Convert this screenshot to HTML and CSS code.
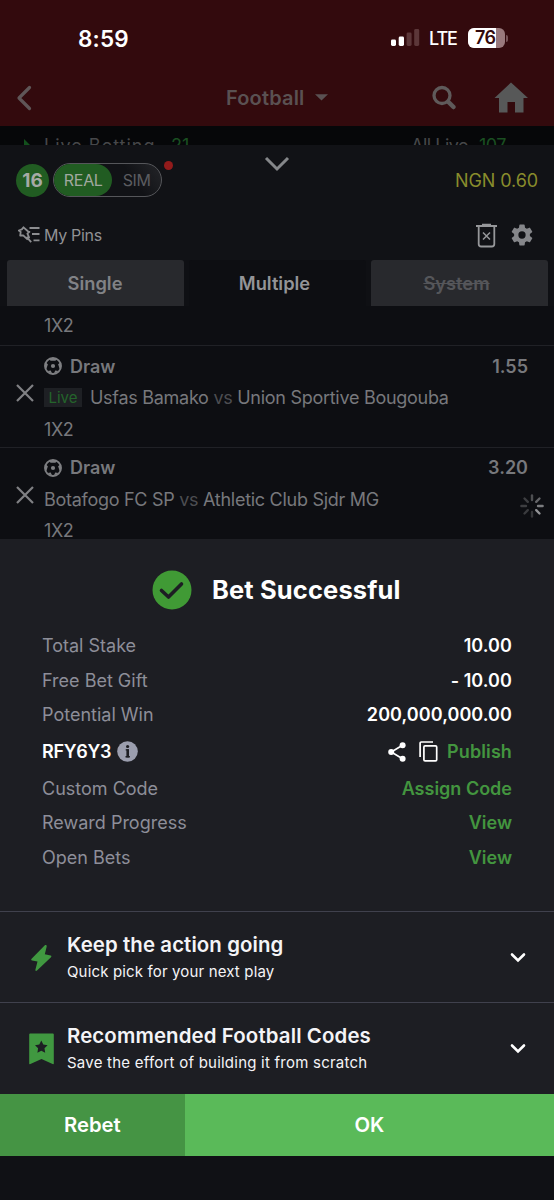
FILE: index.html
```html
<!DOCTYPE html>
<html lang="en">
<head>
<meta charset="utf-8">
<title>Bet Successful</title>
<link rel="stylesheet" href="styles.css">
</head>
<body>
<div class="screen">
  <header class="header">
    <div class="status">
      <span class="clock">8:59</span>
      <svg class="signal" width="30" height="20" viewBox="0 0 30 20"><rect x="1" y="11.5" width="5" height="6.5" rx="1.4" fill="#fff"/><rect x="8.7" y="8.5" width="5.3" height="9.5" rx="1.4" fill="#fff"/><rect x="16.6" y="4.6" width="5" height="13.4" rx="1.4" fill="#5c3739"/><rect x="24.2" y="1" width="5" height="17" rx="1.4" fill="#5c3739"/></svg>
      <span class="lte">LTE</span>
      <span class="battery"><span class="level">76</span></span><span class="battery-tip"></span>
    </div>
    <nav class="nav">
      <svg class="back" width="18" height="28" viewBox="0 0 18 28"><path d="M15.500 3.500 5 14l10.500 10.500" fill="none" stroke="#5f5657" stroke-width="3.200" stroke-linecap="round" stroke-linejoin="round"/></svg>
      <div class="nav-title"><span>Football</span><svg width="13" height="7" viewBox="0 0 13 7"><path d="M0 .3h13L6.500 6.500z" fill="#5a5152"/></svg></div>
      <svg class="search" width="26" height="26" viewBox="0 0 26 26"><circle cx="11" cy="10.500" r="8" fill="none" stroke="#5f5a5a" stroke-width="3.300"/><path d="m17.500 17 5 5" stroke="#5f5a5a" stroke-width="4.500" stroke-linecap="round"/></svg>
      <svg class="home" width="34" height="31" viewBox="0 0 34 31"><path d="M17 .5 34 16h-4.500v14.500h-8.500V20h-7.500v10.500H5V16H.5z" fill="#575858"/></svg>
    </nav>
  </header>
  <div class="strip">
    <svg width="6" height="12" viewBox="0 0 6 12"><path d="M0 0v12l6-6z" fill="#12501c"/></svg>
    <span class="strip-name">Live Betting</span><span class="strip-count">21</span>
    <span class="strip-all">All Live</span><span class="strip-total">107</span>
  </div>
  <section class="slip">
    <div class="slip-top">
      <span class="count">16</span>
      <div class="toggle"><span class="real">REAL</span><span class="sim">SIM</span><i class="dot"></i></div>
      <svg class="collapse" width="26" height="16" viewBox="0 0 26 16"><path d="m2 2 11 11L24 2" fill="none" stroke="#85878a" stroke-width="3"/></svg>
      <span class="balance">NGN 0.60</span>
    </div>
    <div class="pins">
      <svg width="23" height="18" viewBox="0 0 23 18" fill="none" stroke="#8c8d90" stroke-width="1.800"><path d="m5.500 1.300 4.700 4.200 1.200.4-2 1.700 1.700 3.800-1.900 1.800-4-3.900-3 .2.500-3.600-1.900-1.400 3-1.200zM8.500 10.800l4.700 5.400" stroke-linejoin="round"/><path d="M11.500 2h10M14 8h7.500M15.500 14.300h6"/></svg>
      <span>My Pins</span>
      <svg class="trash" width="21" height="25" viewBox="0 0 21 25" fill="none" stroke="#96979a"><path d="M0 3h21M6 1.600h9" stroke-width="1.800"/><path d="M2.700 3v18q0 2.500 2.500 2.500h10.600q2.500 0 2.500-2.500V3" stroke-width="1.800"/><path d="m7 9.500 7 7m0-7-7 7" stroke-width="1.500"/></svg>
      <svg class="gear" width="22" height="22" viewBox="2 2 20 20"><path fill="#85868a" d="M19.140 12.940c.04-.3.060-.61.060-.94s-.02-.64-.07-.94l2.030-1.580a.49.49 0 0 0 .12-.61l-1.920-3.320a.49.49 0 0 0-.59-.22l-2.390.96a7 7 0 0 0-1.620-.94l-.36-2.540A.48.480 0 0 0 13.920 2.400h-3.840a.48.480 0 0 0-.48.410l-.36 2.540a7 7 0 0 0-1.620.94l-2.390-.96a.49.490 0 0 0-.59.220L2.720 8.870a.48.480 0 0 0 .12.610l2.030 1.580a6 6 0 0 0 0 1.880l-2.030 1.580a.49.490 0 0 0-.12.610l1.920 3.320c.12.220.37.290.59.220l2.390-.96c.5.380 1.030.7 1.620.94l.36 2.540c.05.240.24.410.48.410h3.840c.24 0 .44-.17.480-.41l.36-2.540a7 7 0 0 0 1.620-.94l2.390.96c.22.080.47 0 .59-.22l1.920-3.320a.48.480 0 0 0-.12-.61zM12 15.300a3.300 3.300 0 1 1 0-6.600 3.300 3.300 0 0 1 0 6.600z"/></svg>
    </div>
    <div class="tabs"><span class="tab">Single</span><span class="tab active">Multiple</span><span class="tab off">System</span></div>
    <div class="bets">
      <div class="bet first"><div class="market">1X2</div></div>
      <div class="bet">
        <svg class="remove" width="18" height="18" viewBox="0 0 18 18"><path d="m1 1 16 16M17 1 1 17" stroke="#808184" stroke-width="2.200"/></svg>
        <div class="pick"><svg width="18" height="18" viewBox="0 0 18 18"><circle cx="9" cy="9" r="8" fill="none" stroke="#7e7f82" stroke-width="1.900"/><circle cx="9" cy="9" r="2.100" fill="#7e7f82"/><path d="M5 1.500h8L11.500 3.700h-5zM1 5l2.900 2.300L2.400 11.800 1 12zM17 5l-2.900 2.300 1.500 4.500 1.400.2zM3.500 14l3.300-.4 1.400 3.400zM14.500 14l-3.300-.4L9.800 17z" fill="#7e7f82"/></svg><span class="draw">Draw</span><span class="odds">1.55</span></div>
        <div class="match"><span class="live">Live</span><span class="teams">Usfas Bamako <em>vs</em> Union Sportive Bougouba</span></div>
        <div class="market">1X2</div>
      </div>
      <div class="bet">
        <svg class="remove" width="18" height="18" viewBox="0 0 18 18"><path d="m1 1 16 16M17 1 1 17" stroke="#808184" stroke-width="2.200"/></svg>
        <div class="pick"><svg width="18" height="18" viewBox="0 0 18 18"><circle cx="9" cy="9" r="8" fill="none" stroke="#7e7f82" stroke-width="1.900"/><circle cx="9" cy="9" r="2.100" fill="#7e7f82"/><path d="M5 1.500h8L11.500 3.700h-5zM1 5l2.900 2.300L2.400 11.800 1 12zM17 5l-2.900 2.300 1.500 4.500 1.400.2zM3.500 14l3.300-.4 1.400 3.400zM14.500 14l-3.300-.4L9.800 17z" fill="#7e7f82"/></svg><span class="draw">Draw</span><span class="odds">3.20</span></div>
        <div class="match"><span class="teams">Botafogo FC SP <em>vs</em> Athletic Club Sjdr MG</span></div>
        <div class="market">1X2</div>
      </div>
      <svg class="spinner" width="24" height="24" viewBox="-12 -12 24 24" stroke-width="2.400" stroke-linecap="round"><path d="M0-6v-4.600" stroke="#4e4f52"/><path d="m4.200-4.200 3.300-3.300" stroke="#646568"/><path d="M6 0h4.600" stroke="#7b7c7f"/><path d="m4.200 4.200 3.300 3.300" stroke="#929396"/><path d="M0 6v4.600" stroke="#353639"/><path d="m-4.200 4.200-3.300 3.300" stroke="#3a3b3e"/><path d="M-6 0h-4.600" stroke="#3d3e41"/><path d="m-4.200-4.200-3.300-3.300" stroke="#3d3e41"/></svg>
    </div>
  </section>
  <main class="result">
    <h1 class="title"><svg width="40" height="40" viewBox="0 0 40 40"><circle cx="20" cy="20" r="19.500" fill="#409a35"/><path d="m9.500 20.500 7 6.500L29.500 14" fill="none" stroke="#1d1e23" stroke-width="3.600" stroke-linecap="round" stroke-linejoin="round"/></svg><span>Bet Successful</span></h1>
    <div class="rows">
      <div class="row"><span>Total Stake</span><b>10.00</b></div>
      <div class="row"><span>Free Bet Gift</span><b>- 10.00</b></div>
      <div class="row"><span>Potential Win</span><b>200,000,000.00</b></div>
      <div class="row code"><b class="booking">RFY6Y3</b><svg class="info" width="21" height="21" viewBox="0 0 21 21"><circle cx="10.500" cy="10.500" r="10.300" fill="#9b9eae"/><circle cx="10.600" cy="5.500" r="1.600" fill="#1d1e23"/><path d="M8.700 8.900h3M8.500 15.700h4.400" stroke="#1d1e23" stroke-width="1.400" fill="none"/><path d="M10.700 8.200v8.200" stroke="#1d1e23" stroke-width="2.600"/></svg>
        <div class="actions"><svg width="18" height="20" viewBox="0 0 18 20"><path d="M14.500 3.300 3.300 10l11.200 6.700" fill="none" stroke="#fff" stroke-width="1.700"/><circle cx="14.600" cy="3.300" r="3" fill="#fff"/><circle cx="3.200" cy="10" r="3" fill="#fff"/><circle cx="14.600" cy="16.700" r="3" fill="#fff"/></svg><svg class="copy" width="19" height="21" viewBox="0 0 19 21" fill="none" stroke="#fff" stroke-width="1.700"><rect x="4.900" y="4.900" width="12.800" height="15" rx="1.200"/><path d="M1.100 16V2.200q0-1.200 1.200-1.200H14"/></svg><a>Publish</a></div></div>
      <div class="row"><span>Custom Code</span><a>Assign Code</a></div>
      <div class="row"><span>Reward Progress</span><a>View</a></div>
      <div class="row"><span>Open Bets</span><a>View</a></div>
    </div>
    <div class="card">
      <svg width="28" height="32" viewBox="0 0 28 32"><path d="m17.600 3.500-13 13.200c-.7.800-.5 1.500.5 1.700l5.400 1.200-2.100 8.200c-.3 1.300.8 1.500 1.600.7l14-13.300c.7-.8.5-1.500-.4-1.700l-5.800-1.200 1.900-7.700c.3-1.400-1-2.200-2.100-1.100z" fill="#409840"/></svg>
      <div class="card-text"><h2 class="c1">Keep the action going</h2><p class="s1">Quick pick for your next play</p></div>
      <svg class="down" width="16" height="12" viewBox="0 0 16 12"><path d="m2 2.500 6 6 6-6" fill="none" stroke="#fff" stroke-width="2.600" stroke-linecap="round"/></svg>
    </div>
    <div class="card">
      <svg width="28" height="32" viewBox="0 0 28 32"><path d="M3.200.5h22.600q1 0 1 1v29q0 1-1.200.6L14.500 26 3.400 31.100q-1.200.4-1.200-.6v-29q0-1 1-1z" fill="#409840"/><path d="m14.300 7.500 2 4.100 4.300.6-3.100 3.100.7 4.500-3.900-2.100-3.900 2.100.7-4.500-3.100-3.100 4.300-.6z" fill="#1d1e23"/></svg>
      <div class="card-text"><h2 class="c2">Recommended Football Codes</h2><p class="s2">Save the effort of building it from scratch</p></div>
      <svg class="down" width="16" height="12" viewBox="0 0 16 12"><path d="m2 2.500 6 6 6-6" fill="none" stroke="#fff" stroke-width="2.600" stroke-linecap="round"/></svg>
    </div>
  </main>
  <footer class="buttons"><span class="rebet">Rebet</span><span class="ok">OK</span></footer>
</div>
</body>
</html>
```
FILE: styles.css
```css
* { box-sizing: border-box; margin: 0; padding: 0; }
body { background: #101115; font-family: Inter, "Liberation Sans", sans-serif; }
svg { display: block; flex: none; }
span, b, a { white-space: nowrap; }
.screen { width: 554px; height: 1200px; overflow: hidden; background: #101115; }
.header { height: 126px; background: #330a0d; }
.status { display: flex; align-items: center; height: 76px; padding-left: 78px; color: #fff; }
.clock { width: 52px; font-size: 22.500px; font-weight: 600; letter-spacing: .2px; }
.signal { margin-left: 260px; }
.lte { width: 29px; margin-left: 9px; font-size: 18px; font-weight: 500; letter-spacing: -1.1px; }
.battery { width: 37px; height: 20px; margin-left: 10px; border-radius: 6px; overflow: hidden; background: #99797c; }
.level { display: block; width: 28px; height: 20px; padding-left: 7px; background: #fff; color: #330a0d; font-size: 18px; font-weight: 600; line-height: 20px; letter-spacing: -.7px; }
.battery-tip { width: 2px; height: 7px; margin-left: 1px; border-radius: 0 2px 2px 0; background: #765357; }
.nav { display: flex; align-items: center; height: 43px; padding-left: 14px; }
.nav-title { display: flex; align-items: center; gap: 11px; margin-left: 194px; color: #5a5152; font-size: 20px; font-weight: 600; letter-spacing: .15px; }
.search { margin-left: 103px; }
.home { margin-left: 37px; }
.strip { display: flex; height: 19px; padding: 9px 0 0 24px; overflow: hidden; background: #060709; font-size: 18px; line-height: 22px; color: #46474a; }
.strip svg { margin-top: 4px; }
.strip-name { width: 113px; margin-left: 14px; letter-spacing: 1px; }
.strip-count { width: 20px; margin-left: 14px; color: #1a4f21; }
.strip-all { width: 56px; margin-left: 220px; letter-spacing: -.5px; }
.strip-total { margin-left: 12px; color: #1a4f21; letter-spacing: -.5px; }
.slip { height: 394px; background: #111216; }
.slip-top { display: flex; align-items: center; height: 70px; padding: 0 16px; }
.count { width: 33px; height: 33px; border-radius: 50%; background: #215c22; color: #a6aaa6; font-size: 19px; font-weight: 700; line-height: 33px; text-align: center; }
.toggle { position: relative; display: flex; width: 109px; height: 34px; margin-left: 4px; border: 1px solid #55565a; border-radius: 17px; font-size: 16px; line-height: 33px; text-align: center; color: #5b5c60; background: linear-gradient(55deg, #111216 70%, #242529); }
.real { width: 59px; border-radius: 16px; background: #215c22; color: #a0a89f; letter-spacing: -.3px; }
.sim { width: 49px; letter-spacing: -.3px; }
.dot { position: absolute; top: -3px; right: -12px; width: 9px; height: 9px; border-radius: 50%; background: #921b1b; }
.collapse { margin: -32px 0 0 102px; }
.balance { margin-left: auto; color: #898c2c; font-size: 18px; letter-spacing: -.1px; }
.pins { display: flex; align-items: center; height: 40px; padding: 0 21px 0 18px; color: #909194; font-size: 16px; letter-spacing: -.3px; }
.pins span { margin-left: 3px; }
.trash { margin-left: auto; }
.gear { margin-left: 14px; }
.tabs { display: grid; grid-template-columns: 177px 177px 177px; gap: 5px; height: 51px; padding: 5px 6.500px 0; background: linear-gradient(#111216 5px, #0f1014 5px); }
.tab { height: 46px; border-radius: 3px 3px 0 0; background: #28292d; color: #818286; font-size: 18.300px; font-weight: 600; line-height: 47px; text-align: center; }
.active { padding-right: 5px; background: #0d0e12; color: #939497; }
.off { padding-right: 5px; color: #55565a; text-decoration: line-through; }
.bets { position: relative; height: 233px; overflow: hidden; background: #0d0e12; color: #77787c; font-size: 18px; }
.bet { position: relative; height: 101.700px; padding: 6.500px 26px 0 44px; border-top: 1px solid #202126; }
.market { height: 32px; line-height: 32px; letter-spacing: -.4px; margin-top: -2px; }
.first { height: 39px; padding-top: 6px; border-top: 0; }
.remove { position: absolute; left: 15.500px; top: 38px; }
.pick { display: flex; align-items: center; height: 27px; font-weight: 600; }
.draw { margin-left: 8px; }
.odds { margin-left: auto; }
.match { display: flex; align-items: center; height: 36px; }
.teams { letter-spacing: -.28px; }
.match em { color: #4c4d51; font-style: normal; }
.live { width: 38px; height: 19px; margin-right: 8px; background: #1e2024; color: #24642b; font-size: 15px; line-height: 19px; text-align: center; }
.spinner { position: absolute; left: 519.500px; top: 187.500px; }
.result { height: 555px; background: #1d1e23; }
.title { display: flex; align-items: center; gap: 20px; height: 89px; padding: 12px 0 0 152px; color: #fff; font-size: 25.500px; font-weight: 700; letter-spacing: .13px; }
.rows { height: 283px; padding: 0 42px; color: #8d8e99; font-size: 18px; }
.row { display: flex; align-items: center; justify-content: space-between; height: 34.800px; }
.row b { color: #fff; font-weight: 600; letter-spacing: .07px; }
.row a { color: #43953f; font-weight: 600; }
.code { height: 38.300px; justify-content: flex-start; }
.row .booking { letter-spacing: -.3px; }
.info { margin-left: 6px; }
.actions { display: flex; align-items: center; margin-left: auto; }
.actions a { letter-spacing: .1px; }
.copy { margin: 0 9px 0 13px; }
.card { display: flex; align-items: center; height: 91px; padding: 1px 28px 0 27px; border-top: 1px solid #40414d; color: #f4f4f7; }
.card-text { margin-left: 12px; }
.card h2 { height: 28px; font-size: 20.400px; font-weight: 600; line-height: 28px; white-space: nowrap; }
.card p { height: 25px; font-size: 15px; line-height: 26px; white-space: nowrap; }
.c1 { letter-spacing: .1px; }
.c2 { letter-spacing: .13px; }
.s1 { letter-spacing: .15px; }
.s2 { letter-spacing: .23px; }
.down { margin-left: auto; }
.buttons { display: flex; height: 62px; color: #fff; font-size: 20.300px; font-weight: 600; line-height: 62px; text-align: center; }
.rebet { width: 184.700px; background: #459444; }
.ok { flex: 1; background: #5aba59; }
```
